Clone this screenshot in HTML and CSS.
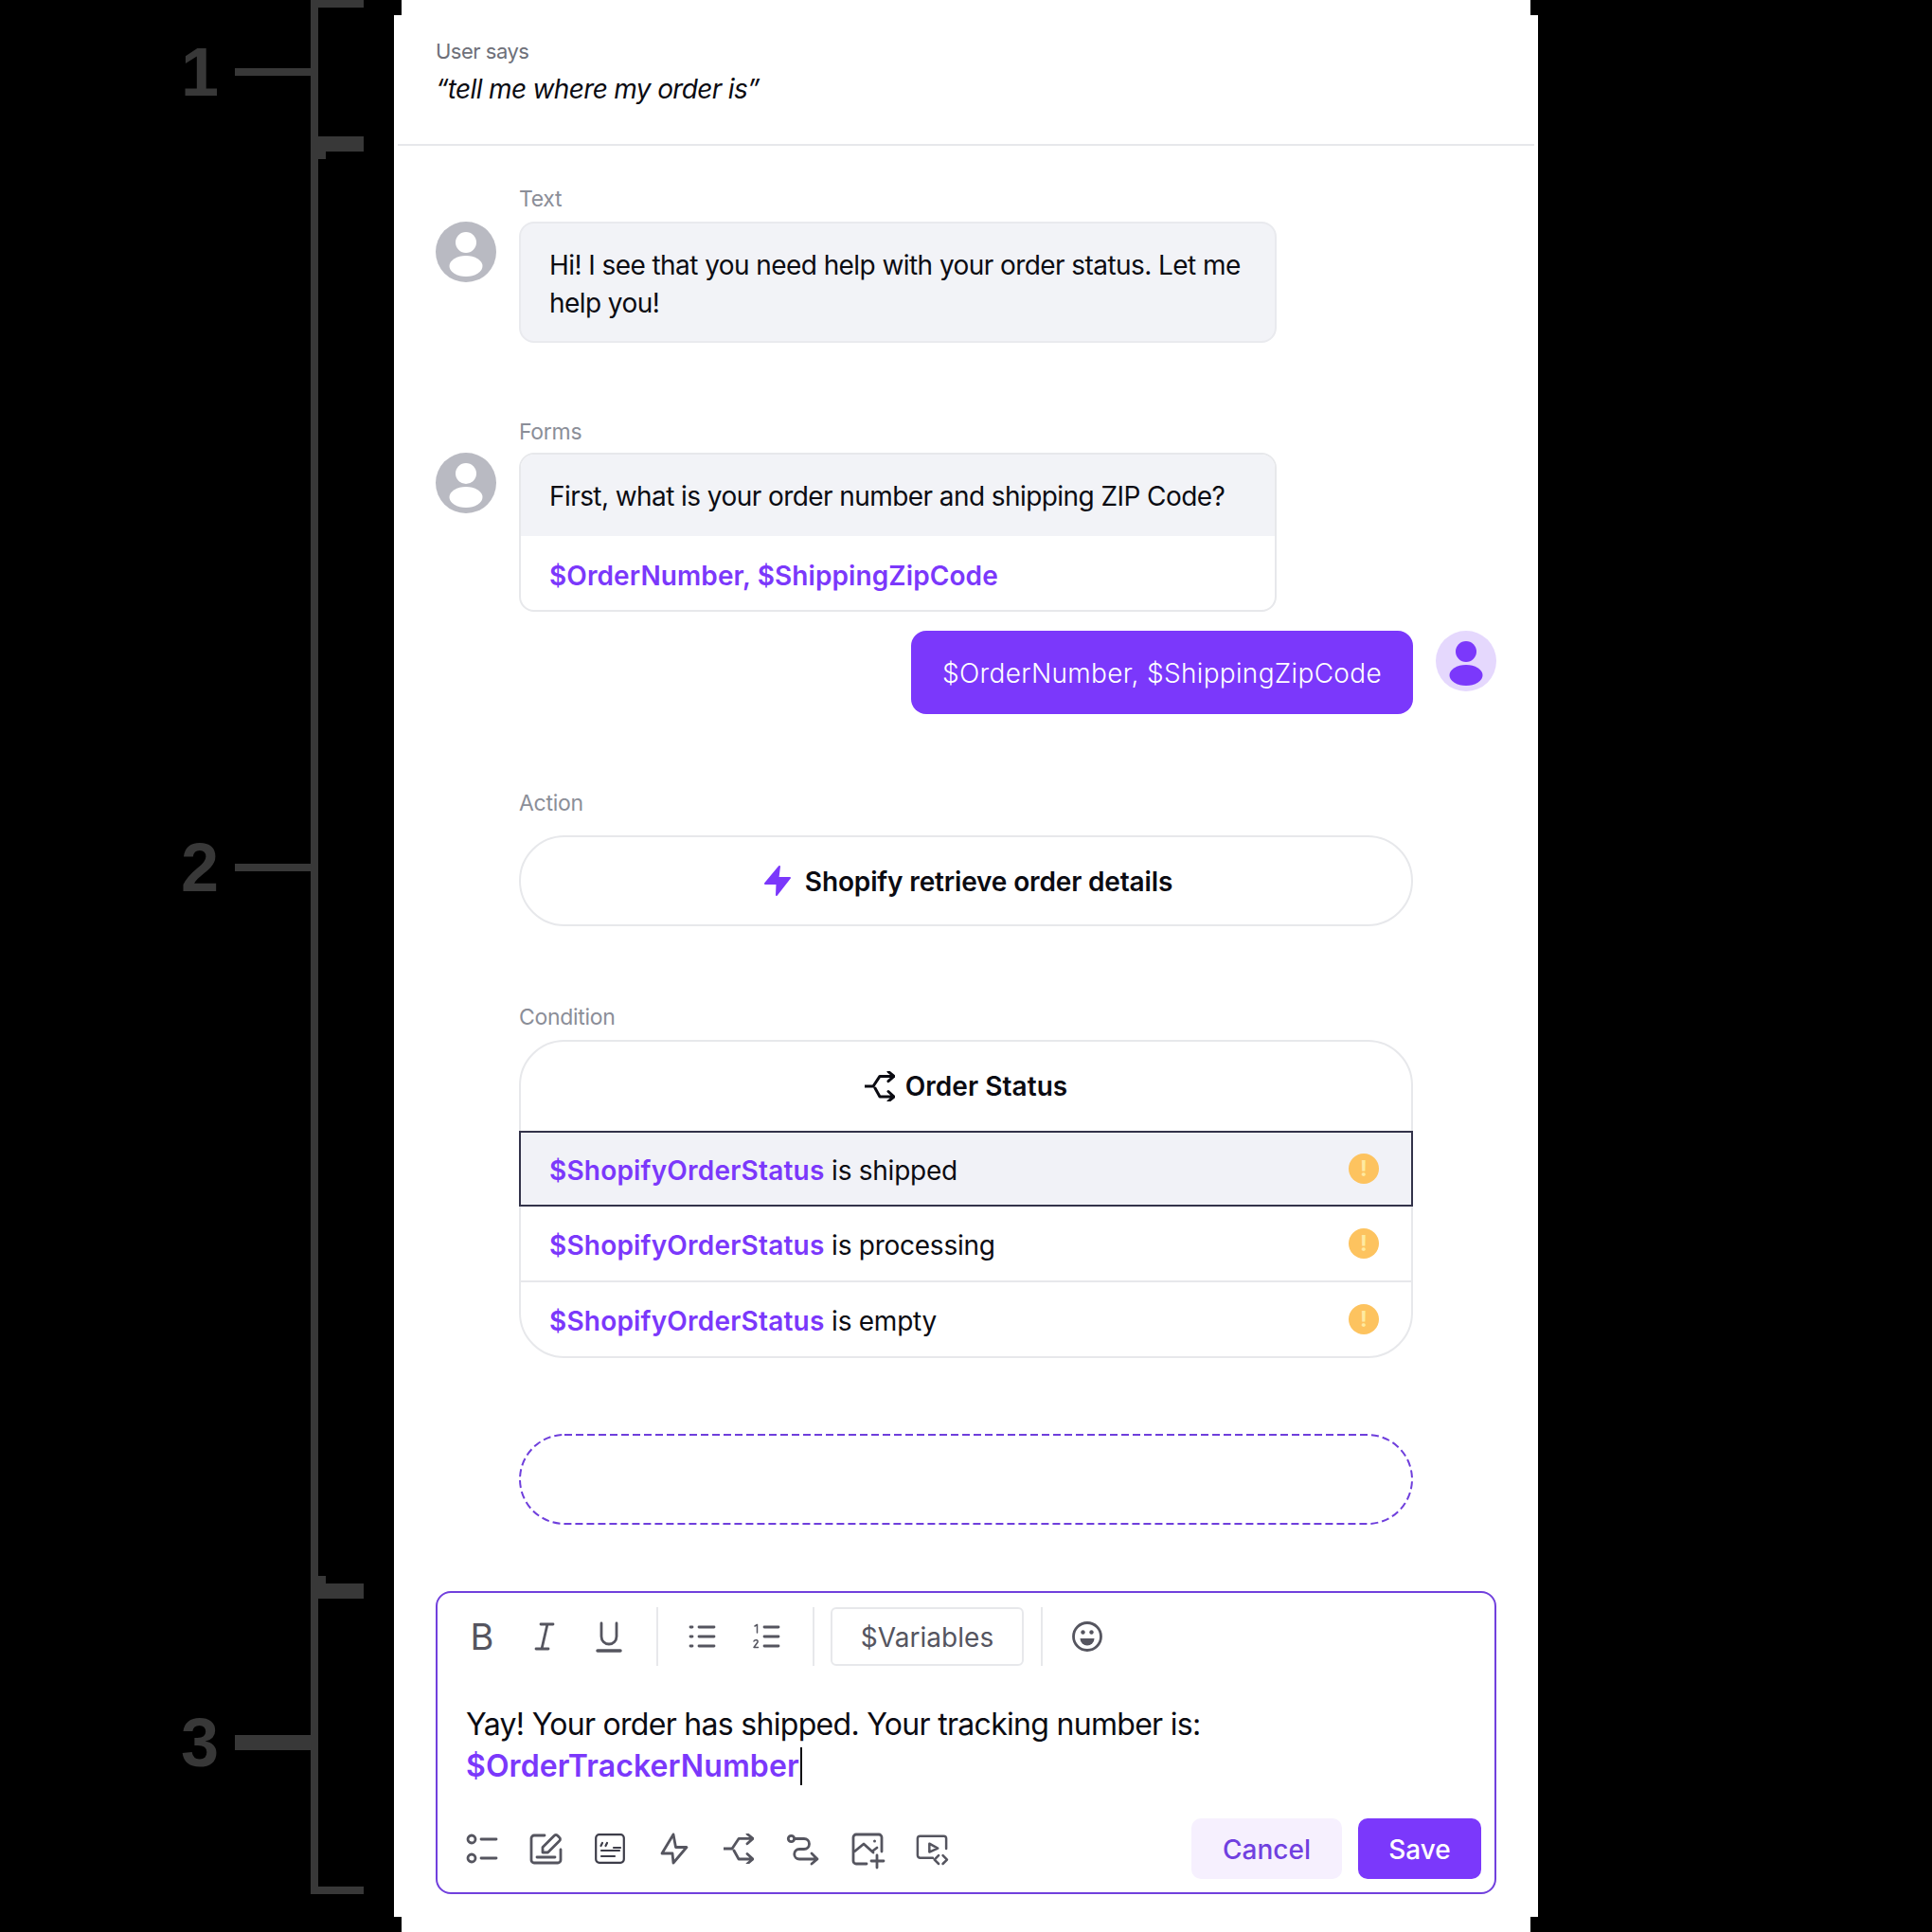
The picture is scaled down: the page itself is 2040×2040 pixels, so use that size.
FILE: index.html
```html
<!DOCTYPE html>
<html lang="en">
<head>
  <meta charset="UTF-8">
  <meta name="viewport" content="width=device-width, initial-scale=1.0">
  <title>Conversation builder</title>
  <link rel="stylesheet" href="styles.css">
</head>
<body>

<svg class="sprites" width="0" height="0">
  <symbol id="split" viewBox="0 0 32 32">
    <path d="M0 16h9l7-10.600h15M25 .5l6 4.900-6 5.300M11 18l5 9h15M25 21.500l6 5.500-6 5"/>
  </symbol>
  <symbol id="bot" viewBox="0 0 64 64">
    <circle cx="32" cy="32" r="32" fill="#b9bac2"/>
    <circle cx="32" cy="22" r="11" fill="#fff"/>
    <ellipse cx="32" cy="47" rx="17.500" ry="11" fill="#fff"/>
  </symbol>
</svg>

<!-- bracket annotations on the left -->
<div class="rail">
  <div class="rail-item first">
    <span class="digit">1</span>
    <span class="tick"></span>
    <div class="bracket"></div>
  </div>
  <div class="rail-item middle">
    <span class="digit">2</span>
    <span class="tick"></span>
    <div class="bracket">
      <span class="nub"></span>
      <span class="nub"></span>
    </div>
  </div>
  <div class="rail-item last">
    <span class="digit">3</span>
    <span class="tick"></span>
    <div class="bracket"></div>
  </div>
</div>

<div class="sheet">
  <div class="notch"></div>
  <div class="card">

    <div class="says">
      <div class="says-label">User says</div>
      <div class="says-quote">“tell me where my order is”</div>
    </div>

    <div class="flow">
      <div class="turn turn-text">
        <div class="label">Text</div>
        <svg class="avatar"><use href="#bot"/></svg>
        <div class="bubble">Hi! I see that you need help with your order status. Let me<br>help you!</div>
      </div>

      <div class="turn turn-forms">
        <div class="label">Forms</div>
        <svg class="avatar"><use href="#bot"/></svg>
        <div class="form-card">
          <div class="form-question">First, what is your order number and shipping ZIP Code?</div>
          <div class="form-vars">$OrderNumber, $ShippingZipCode</div>
        </div>
      </div>

      <div class="reply">
        <div class="reply-bubble">$OrderNumber, $ShippingZipCode</div>
        <svg class="avatar" viewBox="0 0 64 64">
          <circle cx="32" cy="32" r="32" fill="#e5d8fd"/>
          <circle cx="32" cy="22" r="11" fill="#7b38fb"/>
          <ellipse cx="32" cy="47" rx="17.500" ry="11" fill="#7b38fb"/>
        </svg>
      </div>

      <div class="step step-action">
        <div class="label">Action</div>
        <div class="pill">
          <svg class="pill-bolt" viewBox="0 0 28 32"><path d="M16 1 14.500 13H27L13 31l.5-12H1z"/></svg>
          <span>Shopify retrieve order details</span>
        </div>
      </div>

      <div class="step step-condition">
        <div class="label">Condition</div>
        <div class="cond">
          <div class="cond-head">
            <svg class="ico ico-dark"><use href="#split"/></svg>
            <span>Order Status</span>
          </div>
          <div class="cond-row selected">
            <span class="cond-text"><b>$ShopifyOrderStatus</b> is shipped</span>
            <span class="warn">!</span>
          </div>
          <div class="cond-row">
            <span class="cond-text"><b>$ShopifyOrderStatus</b> is processing</span>
            <span class="warn">!</span>
          </div>
          <div class="cond-row end">
            <span class="cond-text"><b>$ShopifyOrderStatus</b> is empty</span>
            <span class="warn">!</span>
          </div>
        </div>
      </div>

      <svg class="dropzone" viewBox="0 0 944 96">
        <rect x="1" y="1" width="942" height="94" rx="47"/>
      </svg>
    </div>

    <div class="editor">
      <div class="toolbar">
        <span class="tool-b">B</span>
        <svg class="ico" viewBox="0 0 32 32"><path d="M12 3h13M7 29h13M19 3l-6 26"/></svg>
        <svg class="ico tool-u" viewBox="0 0 32 32"><path d="M8 2v14a8 8 0 0 0 16 0V2"/><path class="thick" d="M4 31h24"/></svg>
        <span class="divider"></span>
        <svg class="ico tool-after" viewBox="0 0 32 32"><path d="M12 6h16M12 16h16M12 26h16M3 6h2M3 16h2M3 26h2"/></svg>
        <svg class="ico" viewBox="0 0 32 32"><path d="M15 6h15M15 16h15M15 26h15"/><path class="thin" d="M5 5l2.500-1.500V12M4 21c1-2 5-1.500 4 1l-4 5.500h4.500"/></svg>
        <span class="divider"></span>
        <span class="variables">$Variables</span>
        <span class="divider"></span>
        <svg class="ico tool-after" viewBox="0 0 32 32">
          <circle cx="16" cy="16" r="14.500"/>
          <path class="fill" d="M8.500 18h15a7.500 7.500 0 0 1-15 0z"/>
          <circle class="fill" cx="11.500" cy="11.500" r="2.200"/>
          <circle class="fill" cx="20.500" cy="11.500" r="2.200"/>
        </svg>
      </div>

      <div class="editor-text">
        Yay! Your order has shipped. Your tracking number is:<br>
        <b>$OrderTrackerNumber</b><span class="caret"></span>
      </div>

      <div class="editor-foot">
        <div class="blocks">
          <svg class="ico" viewBox="0 0 32 32"><circle cx="6" cy="6" r="4"/><circle cx="6" cy="26" r="4"/><path d="M16 6h16M16 26h16"/></svg>
          <svg class="ico" viewBox="0 0 32 32"><path d="M15 2H4a3 3 0 0 0-3 3v23a3 3 0 0 0 3 3h25a3 3 0 0 0 3-3V17M7 25h19M13 20v-5.500L25 2.500a2.500 2.500 0 0 1 4 0l1.500 1.500a2.500 2.500 0 0 1 0 4L18.500 20z"/></svg>
          <svg class="ico ico-dense" viewBox="0 0 32 32"><rect x="1.200" y="1.200" width="29.600" height="29.600" rx="3.500"/><path d="M7 18h19M7 24h14M20 15h7M8 10l-1.500 3M13 10l-1.500 3"/></svg>
          <svg class="ico" viewBox="0 0 32 32"><path d="M15 1 3 21h11l1 10 14-16.500H17.500z"/></svg>
          <svg class="ico"><use href="#split"/></svg>
          <svg class="ico" viewBox="0 0 32 32"><circle cx="3.500" cy="5.500" r="3.200"/><path d="M7 5.500h10a5.500 5.500 0 0 1 0 11h-5a5.250 5.250 0 0 0 0 10.500h19M25 21l6 6-6 5"/></svg>
          <svg class="ico" viewBox="0 0 32 32"><path d="M31 19V4a3 3 0 0 0-3-3H4a3 3 0 0 0-3 3v25a3 3 0 0 0 3 3h11M1 20l11-9 10 9M22 18l4-3M26 23v13M20 29h13"/><circle class="fill" cx="23.500" cy="8" r="1.500"/></svg>
          <svg class="ico" viewBox="0 0 36 32"><path d="M19 27H4a3 3 0 0 1-3-3V4a3 3 0 0 1 3-3h28a3 3 0 0 1 3 3v12M15 10l10 5.500L15 20zM26 24l-5 5 5 5M31 24l5 5-5 5"/></svg>
        </div>
        <div class="actions">
          <span class="btn btn-cancel">Cancel</span>
          <span class="btn btn-save">Save</span>
        </div>
      </div>
    </div>

  </div>
  <div class="notch"></div>
</div>

</body>
</html>
```

FILE: styles.css
```css
/* Page */
* { box-sizing: border-box; margin: 0; padding: 0; }
body { display: flex; width: 2040px; height: 2040px; overflow: hidden; background-color: #000; color: #0b0b12; font-family: Inter, "Liberation Sans", sans-serif; font-size: 28px; letter-spacing: -0.57px; }
b { font-weight: 600; color: #7b38fb; }
.sprites { display: block; }

/* Bracket annotations */
.rail { flex: none; width: 416px; height: 2000px; display: flex; flex-direction: column; }
.rail-item { display: flex; align-items: center; padding-left: 192px; }
.rail-item.first { height: 152px; }
.rail-item.middle { height: 1528px; }
.rail-item.last { height: 320px; }
.digit { flex: none; width: 57px; height: 56px; margin-left: -1px; line-height: 56px; font-family: "Liberation Sans", sans-serif; font-size: 72px; font-weight: 700; letter-spacing: 0; color: #383838; }
.tick { width: 80px; height: 8px; background-color: #383838; }
.rail-item.last .tick { height: 16px; }
.bracket { width: 56px; height: 100%; display: flex; flex-direction: column; justify-content: space-between; border: solid #383838; border-width: 8px 0 8px 8px; }
.nub { width: 8px; height: 8px; background-color: #383838; }

/* White sheet */
.sheet { flex: none; width: 1208px; }
.notch { height: 16px; margin: 0 8px; background-color: #fff; }
.card { height: 2008px; background-color: #fff; }

.says { height: 138px; margin: 0 4px; padding: 23px 0 0 40px; border-bottom: 2px solid #e7e8eb; }
.says-label { font-size: 22px; line-height: 30px; color: #6e7079; letter-spacing: -0.5px; }
.says-quote { margin-top: 5px; line-height: 40px; font-style: italic; letter-spacing: -0.65px; }

/* Conversation steps */
.flow { padding: 41px 0 0 44px; }
.label { font-size: 23px; line-height: 30px; color: #8b8e98; letter-spacing: -0.3px; }
.turn { display: grid; grid-template-columns: 64px 800px; column-gap: 24px; }
.turn .label { grid-column: 2; }
.turn-text .label { margin-bottom: 9px; }
.turn-forms { margin-top: 79px; }
.turn-forms .label { margin-bottom: 7px; }
.avatar { width: 64px; height: 64px; }
.bubble { height: 128px; padding: 24px 30px 20px; line-height: 40px; background-color: #f2f3f7; border: 2px solid #e9eaee; border-radius: 16px; }
.form-card { height: 168px; border: 2px solid #e7e8eb; border-radius: 16px; overflow: hidden; }
.form-question { height: 86px; padding: 0 30px; line-height: 88px; background-color: #f2f3f7; }
.form-vars { height: 80px; padding: 0 30px; line-height: 84px; font-weight: 600; letter-spacing: 0.1px; color: #7b38fb; }

.reply { display: flex; justify-content: flex-end; align-items: flex-start; gap: 24px; margin-top: 20px; padding-right: 44px; }
.reply-bubble { width: 530px; height: 88px; line-height: 91px; text-align: center; color: #fff; background-color: #7b38fb; border-radius: 16px; font-weight: 300; letter-spacing: 0.33px; }

.step { padding-left: 88px; width: 1032px; }
.step-action { margin-top: 79px; }
.step-action .label { margin-bottom: 19px; }
.step-condition { margin-top: 81px; }
.step-condition .label { margin-bottom: 9px; }

.pill { height: 96px; padding: 2px 0 0 5px; display: flex; align-items: center; justify-content: center; gap: 15px; border: 2px solid #e7e8eb; border-radius: 48px; font-weight: 600; letter-spacing: -0.15px; }
.pill-bolt { width: 28px; height: 32px; margin-top: -3px; fill: #7b38fb; stroke: #7b38fb; stroke-width: 2; stroke-linejoin: round; }

.cond { height: 336px; border: 2px solid #e7e8eb; border-radius: 48px; }
.cond-head { height: 94px; display: flex; align-items: center; justify-content: center; gap: 11px; font-weight: 600; letter-spacing: 0.05px; }
.cond-row { height: 80px; display: flex; align-items: center; justify-content: space-between; padding: 0 34px 0 30px; border-bottom: 2px solid #e7e8eb; }
.cond-row.selected { margin: 0 -2px; background-color: #f1f2f7; border: 2px solid #33334a; }
.cond-row.end { height: 78px; border-bottom: 0; }
.cond-text { padding-top: 4px; letter-spacing: -0.25px; }
.cond-text b { letter-spacing: 0.2px; }
.warn { width: 32px; height: 32px; line-height: 32px; text-align: center; border-radius: 50%; background-color: #fdc35f; color: #feeaa0; font-size: 23px; font-weight: 700; letter-spacing: 0; }

.dropzone { display: block; width: 944px; height: 96px; margin: 80px 0 0 88px; }
.dropzone rect { fill: none; stroke: #6f3fdc; stroke-width: 2; stroke-dasharray: 8 4; }

/* Icons */
.ico { width: 32px; height: 32px; flex: none; overflow: visible; fill: none; stroke: #55555f; stroke-width: 2.8; stroke-linecap: round; stroke-linejoin: round; }
.ico-dark { stroke: #0b0b12; stroke-width: 3; }
.ico-dense { stroke-width: 2.2; stroke: #3d3d49; }
.ico .fill { fill: #55555f; stroke: none; }
.ico .thin { stroke-width: 1.500; }
.ico .thick { stroke-width: 3.500; }

/* Editor */
.editor { height: 320px; margin: 70px 44px 0; padding: 15px 14px 14px 30px; border: 2px solid #7140dd; border-radius: 16px; }
.toolbar { height: 62px; padding-left: 1px; display: flex; align-items: center; gap: 34px; }
.tool-b { width: 32px; text-align: center; font-size: 38px; line-height: 32px; color: #55555f; letter-spacing: 0; }
.tool-u { margin-left: 2px; }
.divider { width: 2px; height: 62px; background-color: #e7e8eb; }
.tool-after { margin-left: -3px; }
.variables { width: 204px; height: 62px; margin: 0 -16px 0 -17px; padding-top: 1px; line-height: 58px; text-align: center; border: 2px solid #e7e8eb; border-radius: 6px; color: #55555f; letter-spacing: 0.05px; }

.editor-text { margin-top: 40px; font-size: 32px; line-height: 44px; letter-spacing: -0.7px; }
.editor-text b { letter-spacing: 0.1px; }
.caret { display: inline-block; width: 2px; height: 40px; margin-left: 1px; vertical-align: -9px; background-color: #0b0b12; }

.editor-foot { display: flex; justify-content: space-between; align-items: center; margin-top: 33px; }
.blocks { display: flex; gap: 36px; align-items: center; }
.actions { display: flex; gap: 17px; }
.btn { height: 64px; line-height: 67px; text-align: center; border-radius: 10px; font-weight: 500; letter-spacing: 0; }
.btn-cancel { width: 159px; background-color: #f6f0fe; color: #7040e0; }
.btn-save { width: 130px; background-color: #7b38fb; color: #fff; }
```
